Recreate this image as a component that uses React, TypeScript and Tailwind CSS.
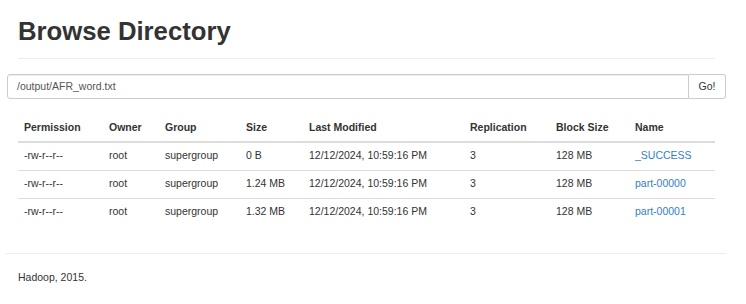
import { useState } from "react";

type Entry = {
  permission: string;
  owner: string;
  group: string;
  size: string;
  modified: string;
  replication: number;
  blockSize: string;
  name: string;
};

const entries: Entry[] = [
  { permission: "-rw-r--r--", owner: "root", group: "supergroup", size: "0 B", modified: "12/12/2024, 10:59:16 PM", replication: 3, blockSize: "128 MB", name: "_SUCCESS" },
  { permission: "-rw-r--r--", owner: "root", group: "supergroup", size: "1.24 MB", modified: "12/12/2024, 10:59:16 PM", replication: 3, blockSize: "128 MB", name: "part-00000" },
  { permission: "-rw-r--r--", owner: "root", group: "supergroup", size: "1.32 MB", modified: "12/12/2024, 10:59:16 PM", replication: 3, blockSize: "128 MB", name: "part-00001" },
];

const columns = [
  { label: "Permission", width: "w-[85px]" },
  { label: "Owner", width: "w-[56px]" },
  { label: "Group", width: "w-[81px]" },
  { label: "Size", width: "w-[63px]" },
  { label: "Last Modified", width: "w-[161px]" },
  { label: "Replication", width: "w-[86px]" },
  { label: "Block Size", width: "w-[79px]" },
  { label: "Name", width: "w-[86px]" },
];

const App = () => {
  const [path, setPath] = useState("/output/AFR_word.txt");

  return (
    <div className="min-h-[304px] bg-white text-[#333] text-[10.5px] font-['Liberation_Sans',Arial,sans-serif]">
      <div className="ml-[18px] mr-[31px] pt-[16px] pb-[12px] border-b border-[#eee]">
        <h1 className="text-[25.7px] leading-[30px] font-bold">Browse Directory</h1>
      </div>

      <div className="ml-[7px] mr-[20px] mt-[15px] flex h-[25px]">
        <input
          value={path}
          onChange={(e) => setPath(e.target.value)}
          className="flex-1 min-w-0 border border-[#ccc] rounded-l-[3px] px-[9px] text-[10.5px] text-[#555] outline-none shadow-[inset_0_1px_1px_rgba(0,0,0,0.075)]"
        />
        <button className="w-[37px] border border-l-0 border-[#ccc] rounded-r-[3px] bg-white text-[10.5px] text-[#333]">
          Go!
        </button>
      </div>

      <table className="ml-[18px] mt-[15px] w-[697px] table-fixed border-collapse">
        <thead>
          <tr>
            {columns.map((c) => (
              <th
                key={c.label}
                className={`${c.width} h-[28px] px-[6px] text-left font-bold border-b-2 border-[#ddd] align-middle`}
              >
                {c.label}
              </th>
            ))}
          </tr>
        </thead>
        <tbody>
          {entries.map((e) => (
            <tr key={e.name} className="border-t border-[#ddd] first:border-t-0">
              <td className="h-[28px] px-[6px]">{e.permission}</td>
              <td className="px-[6px]">{e.owner}</td>
              <td className="px-[6px]">{e.group}</td>
              <td className="px-[6px]">{e.size}</td>
              <td className="px-[6px]">{e.modified}</td>
              <td className="px-[6px]">{e.replication}</td>
              <td className="px-[6px]">{e.blockSize}</td>
              <td className="px-[6px]">
                <a href="#" className="text-[#3580c4]">{e.name}</a>
              </td>
            </tr>
          ))}
        </tbody>
      </table>

      <div className="ml-[6px] mr-[20px] mt-[27px] border-t border-[#eee]" />
      <p className="ml-[18px] mt-[16px]">Hadoop, 2015.</p>
    </div>
  );
};

export default App;
